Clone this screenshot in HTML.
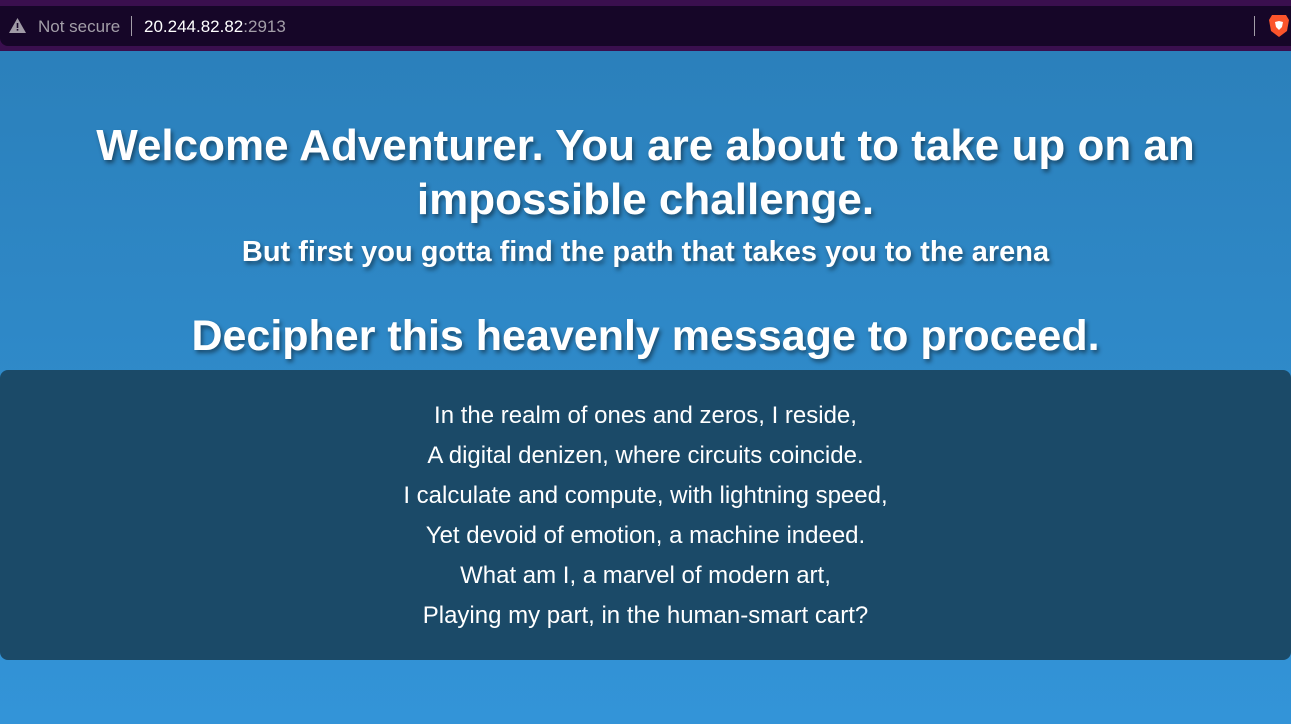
<!DOCTYPE html>
<html><head><style>
html,body{margin:0;padding:0;width:1291px;height:724px;overflow:hidden;font-family:"Liberation Sans",sans-serif}
.top{position:absolute;left:0;top:0;width:1291px;height:51px;background:#3a0f4e}
.bar{position:absolute;left:0;top:6px;width:1291px;height:40px;background:#160628;border-radius:0 0 0 8px}
.main{position:absolute;left:0;top:51px;width:1291px;height:673px;background:linear-gradient(#2b80bb,#3394d8)}
h1,h2,h3{margin:0;position:absolute;left:0;width:1291px;text-align:center;color:#fff;font-weight:bold;text-shadow:2px 3px 4px rgba(0,0,0,.45)}
.panel{position:absolute;left:0;top:370px;width:1291px;height:290px;background:#1b4a68;border-radius:8px}
.p{position:absolute;left:0;width:1291px;text-align:center;color:#fff;font-size:24px;line-height:28px}
</style></head><body>
<div class="top"></div>
<div class="bar">
<svg style="position:absolute;left:9px;top:12px" width="17" height="15" viewBox="0 0 17 15"><path d="M8.5 0L17 15H0Z" fill="#a09aa6"/><rect x="7.7" y="5" width="1.6" height="5" fill="#160628"/><rect x="7.7" y="11" width="1.6" height="1.6" fill="#160628"/></svg>
<span style="position:absolute;left:38px;top:11px;font-size:17px;color:#a39ea8">Not secure</span>
<span style="position:absolute;left:131px;top:10px;width:1px;height:20px;background:#a39ea8"></span>
<span style="position:absolute;left:144px;top:11px;font-size:17px;color:#fff">20.244.82.82<span style="color:#a39ea8">:2913</span></span>
<span style="position:absolute;left:1254px;top:10px;width:1px;height:20px;background:#a39ea8"></span>
<svg style="position:absolute;left:1269px;top:8px" width="20" height="24" viewBox="0 0 20 24"><path d="M3 1H17L20 6L18 17L10 23L2 17L0 6Z" fill="#fb542b"/><path d="M6 8L10 7L14 8L13 13L10 16L7 13Z" fill="#fff"/></svg>
</div>
<div class="main"></div>
<h1 style="top:119px;font-size:44px;line-height:54px">Welcome Adventurer. You are about to take up on an<br>impossible challenge.</h1>
<h3 style="top:235px;font-size:29px;line-height:34px">But first you gotta find the path that takes you to the arena</h3>
<h2 style="top:311px;font-size:43px;line-height:50px">Decipher this heavenly message to proceed.</h2>
<div class="panel"></div>
<div class="p" style="top:402px">In the realm of ones and zeros, I reside,</div>
<div class="p" style="top:442px">A digital denizen, where circuits coincide.</div>
<div class="p" style="top:482px">I calculate and compute, with lightning speed,</div>
<div class="p" style="top:522px">Yet devoid of emotion, a machine indeed.</div>
<div class="p" style="top:562px">What am I, a marvel of modern art,</div>
<div class="p" style="top:602px">Playing my part, in the human-smart cart?</div>
</body></html>
